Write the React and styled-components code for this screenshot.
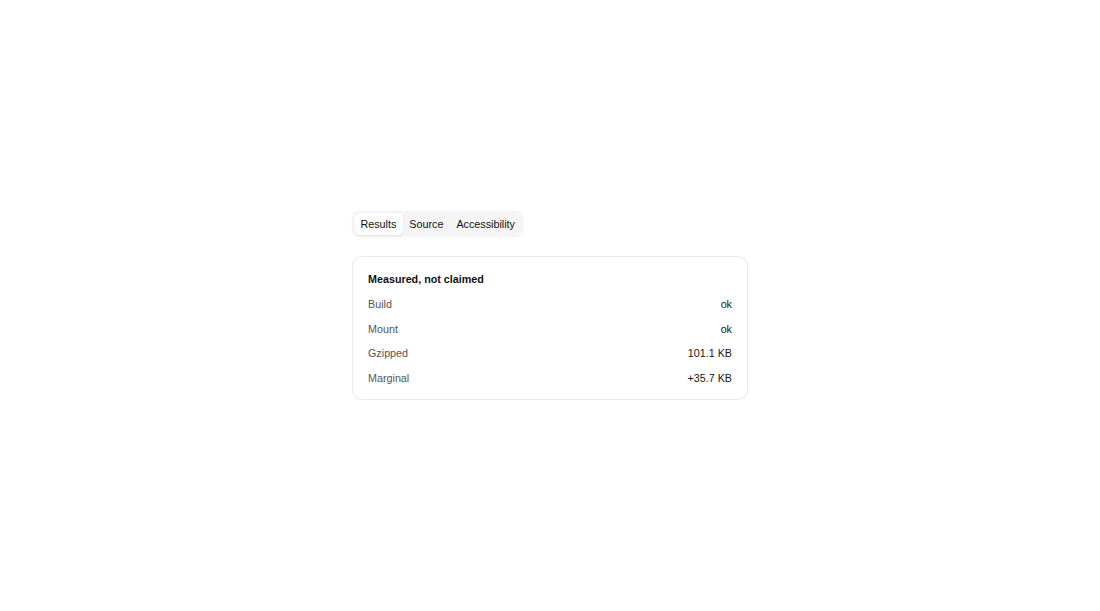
import React, { useState } from 'react'
import styled, { createGlobalStyle } from 'styled-components'

const GlobalStyle = createGlobalStyle`
  html, body {
    margin: 0;
    padding: 0;
    background: #fff;
  }
  body {
    font-family: "Liberation Sans", Arial, sans-serif;
    color: #171717;
  }
`

const tabs = ['Results', 'Source', 'Accessibility']

const rows = [
  { label: 'Build', value: 'ok' },
  { label: 'Mount', value: 'ok' },
  { label: 'Gzipped', value: '101.1 KB' },
  { label: 'Marginal', value: '+35.7 KB' },
]

const App = () => {
  const [active, setActive] = useState('Results')

  return (
    <>
      <GlobalStyle />
      <Page>
        <Column>
          <TabList>
            {tabs.map(tab => (
              <Tab key={tab} active={tab === active} onClick={() => setActive(tab)}>
                {tab}
              </Tab>
            ))}
          </TabList>
          <Card>
            <Title>Measured, not claimed</Title>
            {rows.map(row => (
              <Row key={row.label}>
                <Label>{row.label}</Label>
                <Value>{row.value}</Value>
              </Row>
            ))}
          </Card>
        </Column>
      </Page>
    </>
  )
}

export default App

const Page = styled.div`
  min-height: 611px;
  display: flex;
  align-items: center;
  justify-content: center;
`

const Column = styled.div`
  width: 396px;
  display: flex;
  flex-direction: column;
  align-items: flex-start;
  gap: 19px;
`

const TabList = styled.div`
  display: flex;
  padding: 2px;
  border-radius: 8px;
  background-color: #f5f5f5;
  box-shadow: 0 0 3px rgba(0,0,0,0.04);
`

const Tab = styled.button.withConfig({ shouldForwardProp: p => p !== 'active' })`
  border: none;
  background: ${p => (p.active ? '#fff' : 'transparent')};
  box-shadow: ${p => (p.active ? '0 1px 2px rgba(0,0,0,0.08)' : 'none')};
  border-radius: 6px;
  padding: 0 6.5px;
  height: 22px;
  font-family: "Liberation Sans", Arial, sans-serif;
  font-size: 10.75px;
  color: #111;
  cursor: pointer;
`

const Card = styled.div`
  width: 100%;
  box-sizing: border-box;
  border: 1px solid #e8e8e8;
  border-radius: 10px;
  padding: 14px 15px 9px;
  display: flex;
  flex-direction: column;
`

const Title = styled.div`
  font-size: 10.75px;
  font-weight: 700;
  color: #111;
  line-height: 16px;
  margin-bottom: 5px;
`

const Row = styled.div`
  display: flex;
  justify-content: space-between;
  align-items: center;
  height: 24.4px;
  font-size: 10.75px;
`

const Label = styled.span`
  color: #555;
`

const Value = styled.span`
  color: #171717;
`
